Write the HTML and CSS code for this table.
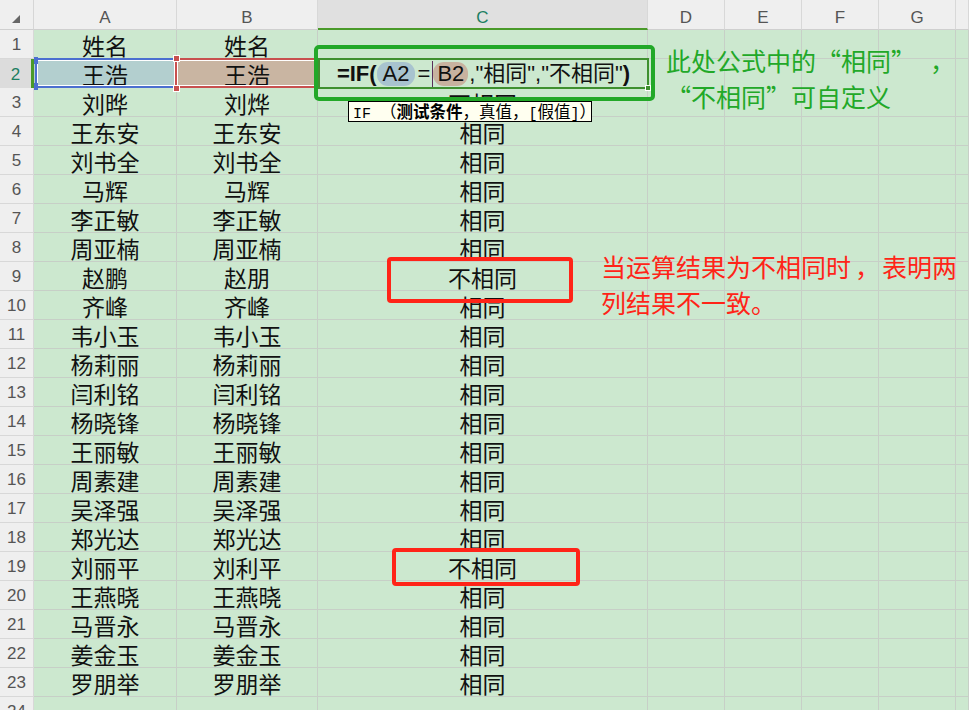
FILE: index.html
```html
<!DOCTYPE html>
<html lang="zh-CN">
<head>
<meta charset="utf-8">
<title>IF 比较两列</title>
<link rel="stylesheet" href="styles.css">
</head>
<body>
<div class="sheet">
  <div class="row head">
    <div class="corner"><span class="tri"></span></div>
    <div class="ch">A</div>
    <div class="ch">B</div>
    <div class="ch sel">C</div>
    <div class="ch">D</div>
    <div class="ch">E</div>
    <div class="ch">F</div>
    <div class="ch">G</div>
    <div class="ch"></div>
  </div>

  <div class="row"><div class="rh">1</div><div class="cell">姓名</div><div class="cell">姓名</div><div class="cell"></div><div class="cell"></div><div class="cell"></div><div class="cell"></div><div class="cell"></div><div class="cell"></div></div>
  <div class="row"><div class="rh active">2</div><div class="cell ref-a">王浩<span class="hd tl"></span><span class="hd bl"></span></div><div class="cell ref-b">王浩<span class="hd tl"></span><span class="hd bl"></span></div><div class="cell editing"><span class="formula"><b>=IF(</b><span class="pill pa">A2</span>=<span class="caret"></span><span class="pill pb">B2</span>,"相同","不相同"<b>)</b></span><span class="fill"></span></div><div class="cell"></div><div class="cell"></div><div class="cell"></div><div class="cell"></div><div class="cell"></div></div>
  <div class="row"><div class="rh">3</div><div class="cell">刘晔</div><div class="cell">刘烨</div><div class="cell">不相同</div><div class="cell"></div><div class="cell"></div><div class="cell"></div><div class="cell"></div><div class="cell"></div></div>
  <div class="row"><div class="rh">4</div><div class="cell">王东安</div><div class="cell">王东安</div><div class="cell">相同</div><div class="cell"></div><div class="cell"></div><div class="cell"></div><div class="cell"></div><div class="cell"></div></div>
  <div class="row"><div class="rh">5</div><div class="cell">刘书全</div><div class="cell">刘书全</div><div class="cell">相同</div><div class="cell"></div><div class="cell"></div><div class="cell"></div><div class="cell"></div><div class="cell"></div></div>
  <div class="row"><div class="rh">6</div><div class="cell">马辉</div><div class="cell">马辉</div><div class="cell">相同</div><div class="cell"></div><div class="cell"></div><div class="cell"></div><div class="cell"></div><div class="cell"></div></div>
  <div class="row"><div class="rh">7</div><div class="cell">李正敏</div><div class="cell">李正敏</div><div class="cell">相同</div><div class="cell"></div><div class="cell"></div><div class="cell"></div><div class="cell"></div><div class="cell"></div></div>
  <div class="row"><div class="rh">8</div><div class="cell">周亚楠</div><div class="cell">周亚楠</div><div class="cell">相同</div><div class="cell"></div><div class="cell"></div><div class="cell"></div><div class="cell"></div><div class="cell"></div></div>
  <div class="row"><div class="rh">9</div><div class="cell">赵鹏</div><div class="cell">赵朋</div><div class="cell">不相同</div><div class="cell"></div><div class="cell"></div><div class="cell"></div><div class="cell"></div><div class="cell"></div></div>
  <div class="row"><div class="rh">10</div><div class="cell">齐峰</div><div class="cell">齐峰</div><div class="cell">相同</div><div class="cell"></div><div class="cell"></div><div class="cell"></div><div class="cell"></div><div class="cell"></div></div>
  <div class="row"><div class="rh">11</div><div class="cell">韦小玉</div><div class="cell">韦小玉</div><div class="cell">相同</div><div class="cell"></div><div class="cell"></div><div class="cell"></div><div class="cell"></div><div class="cell"></div></div>
  <div class="row"><div class="rh">12</div><div class="cell">杨莉丽</div><div class="cell">杨莉丽</div><div class="cell">相同</div><div class="cell"></div><div class="cell"></div><div class="cell"></div><div class="cell"></div><div class="cell"></div></div>
  <div class="row"><div class="rh">13</div><div class="cell">闫利铭</div><div class="cell">闫利铭</div><div class="cell">相同</div><div class="cell"></div><div class="cell"></div><div class="cell"></div><div class="cell"></div><div class="cell"></div></div>
  <div class="row"><div class="rh">14</div><div class="cell">杨晓锋</div><div class="cell">杨晓锋</div><div class="cell">相同</div><div class="cell"></div><div class="cell"></div><div class="cell"></div><div class="cell"></div><div class="cell"></div></div>
  <div class="row"><div class="rh">15</div><div class="cell">王丽敏</div><div class="cell">王丽敏</div><div class="cell">相同</div><div class="cell"></div><div class="cell"></div><div class="cell"></div><div class="cell"></div><div class="cell"></div></div>
  <div class="row"><div class="rh">16</div><div class="cell">周素建</div><div class="cell">周素建</div><div class="cell">相同</div><div class="cell"></div><div class="cell"></div><div class="cell"></div><div class="cell"></div><div class="cell"></div></div>
  <div class="row"><div class="rh">17</div><div class="cell">吴泽强</div><div class="cell">吴泽强</div><div class="cell">相同</div><div class="cell"></div><div class="cell"></div><div class="cell"></div><div class="cell"></div><div class="cell"></div></div>
  <div class="row"><div class="rh">18</div><div class="cell">郑光达</div><div class="cell">郑光达</div><div class="cell">相同</div><div class="cell"></div><div class="cell"></div><div class="cell"></div><div class="cell"></div><div class="cell"></div></div>
  <div class="row"><div class="rh">19</div><div class="cell">刘丽平</div><div class="cell">刘利平</div><div class="cell">不相同</div><div class="cell"></div><div class="cell"></div><div class="cell"></div><div class="cell"></div><div class="cell"></div></div>
  <div class="row"><div class="rh">20</div><div class="cell">王燕晓</div><div class="cell">王燕晓</div><div class="cell">相同</div><div class="cell"></div><div class="cell"></div><div class="cell"></div><div class="cell"></div><div class="cell"></div></div>
  <div class="row"><div class="rh">21</div><div class="cell">马晋永</div><div class="cell">马晋永</div><div class="cell">相同</div><div class="cell"></div><div class="cell"></div><div class="cell"></div><div class="cell"></div><div class="cell"></div></div>
  <div class="row"><div class="rh">22</div><div class="cell">姜金玉</div><div class="cell">姜金玉</div><div class="cell">相同</div><div class="cell"></div><div class="cell"></div><div class="cell"></div><div class="cell"></div><div class="cell"></div></div>
  <div class="row"><div class="rh">23</div><div class="cell">罗朋举</div><div class="cell">罗朋举</div><div class="cell">相同</div><div class="cell"></div><div class="cell"></div><div class="cell"></div><div class="cell"></div><div class="cell"></div></div>
  <div class="row"><div class="rh">24</div><div class="cell"></div><div class="cell"></div><div class="cell"></div><div class="cell"></div><div class="cell"></div><div class="cell"></div><div class="cell"></div><div class="cell"></div></div>

  <div class="tooltip"><span class="fn">IF </span>（<b>测试条件</b>，真值，<span class="fn">[</span>假值<span class="fn">]</span>）</div>
  <div class="gbox"></div>
  <div class="note green"><div>此处公式中的<span class="q ql">“</span>相同<span class="q qr">”</span><span class="cm">，</span></div><div><span class="q ql">“</span>不相同<span class="q qr">”</span>可自定义</div></div>
  <div class="rbox r1"></div>
  <div class="rbox r2"></div>
  <div class="note red"><div>当运算结果为不相同时<span class="cm2">，</span>表明两</div><div>列结果不一致。</div></div>
</div>
</body>
</html>
```

FILE: styles.css
```css
* { box-sizing: border-box; }

body {
  margin: 0;
  width: 969px;
  height: 710px;
  overflow: hidden;
  background: #efefef;
  font-family: "Noto Sans CJK SC", sans-serif;
}

.sheet {
  position: relative;
  width: 969px;
}

.row {
  display: grid;
  grid-template-columns: 34px 143px 141px 330px 77px 77px 77px 77px 1fr;
  height: 29px;
}

.row.head {
  height: 30px;
}

.corner {
  background: #efefef;
  border-right: 1px solid #d6d6d6;
  border-bottom: 1px solid #cfcfcf;
  position: relative;
}

.tri {
  position: absolute;
  left: 12px;
  top: 15px;
  width: 0;
  height: 0;
  border-left: 8px solid transparent;
  border-bottom: 8px solid #666;
}

.ch {
  background: #efefef;
  border-right: 1px solid #d8d8d8;
  border-bottom: 1px solid #cfcfcf;
  font-family: "Liberation Sans", sans-serif;
  font-size: 17px;
  color: #555;
  display: flex;
  align-items: center;
  justify-content: center;
  padding-top: 6px;
}

.ch.sel {
  background: #e0e0e0;
  color: #1d7f62;
  border-bottom: 2px solid #4a9a2a;
  padding-top: 7px;
}

.rh {
  background: #efefef;
  border-right: 1px solid #d8d8d8;
  border-bottom: 1px solid #d8d8d8;
  font-family: "Liberation Sans", sans-serif;
  font-size: 17px;
  color: #555;
  display: flex;
  align-items: center;
  justify-content: center;
  padding-top: 2px;
}

.rh.active {
  background: #dcdcdc;
  color: #1d7f62;
  border-right: 3px solid #4a9a2a;
}

.cell {
  position: relative;
  background: #cce8cf;
  border-right: 1px solid #c7cfc7;
  border-bottom: 1px solid #c7cfc7;
  font-size: 23px;
  line-height: 25px;
  padding-top: 3px;
  text-align: center;
  color: #111;
  white-space: nowrap;
}

.ref-a {
  background: #b3cfcf;
}

.ref-a::before {
  content: "";
  position: absolute;
  left: 1px;
  top: -1px;
  right: -1px;
  bottom: 0;
  border: 2px solid #4b6fd0;
  box-shadow: inset 0 0 0 1px #fff;
}

.ref-b {
  background: #c9b5a2;
}

.ref-b::before {
  content: "";
  position: absolute;
  left: -2px;
  top: -1px;
  right: 0;
  bottom: 0;
  border: 2px solid #c8504f;
  box-shadow: inset 0 0 0 1px #fff;
}

.hd {
  position: absolute;
  width: 6px;
  height: 7px;
  z-index: 2;
}

.ref-a .hd {
  background: #4b6fd0;
  left: 0;
  width: 4px;
}

.ref-a .hd.tl { top: -2px; }
.ref-a .hd.bl { bottom: -2px; }

.ref-b .hd {
  background: #c8504f;
  border: 1px solid #fff;
  left: -4px;
  width: 7px;
}

.ref-b .hd.tl { top: -4px; }
.ref-b .hd.bl { bottom: -4px; }

.editing {
  display: flex;
  align-items: center;
  justify-content: center;
  border: 2px solid #3f9030;
  margin-top: -1px;
  margin-right: -1px;
  height: 31px;
  padding-top: 0;
  z-index: 1;
}

.formula {
  font-family: "Liberation Sans", "Noto Sans CJK SC", sans-serif;
  font-size: 22px;
  color: #111;
  display: flex;
  align-items: center;
  line-height: 24px;
  margin-top: 1px;
}

.formula b {
  font-weight: 700;
}

.pill {
  display: inline-block;
  padding: 0 4px;
  border-radius: 11px;
  height: 24px;
  line-height: 24px;
}

.pa {
  background: #a8c3cf;
  margin: 0 3px 0 0;
  padding: 0 5px 0 6px;
}

.pb {
  background: #c8b29f;
  margin: 0 1px 0 0;
}

.caret {
  display: inline-block;
  width: 1px;
  height: 26px;
  background: #5a2e5a;
  margin-left: 2px;
}

.fill {
  position: absolute;
  right: -4px;
  bottom: -4px;
  width: 6px;
  height: 6px;
  background: #3f9030;
  border: 1px solid #fff;
}

.tooltip {
  position: absolute;
  left: 348px;
  top: 101px;
  width: 244px;
  height: 21px;
  background: #fffff0;
  border: 1px solid #000;
  font-family: "Noto Sans CJK SC", sans-serif;
  font-size: 16.5px;
  line-height: 19px;
  color: #000;
  padding-left: 4px;
  white-space: nowrap;
  z-index: 5;
}

.tooltip .fn {
  font-family: "Liberation Mono", monospace;
  font-size: 15px;
}

.tooltip b {
  font-weight: 700;
}

.gbox {
  position: absolute;
  left: 314px;
  top: 45px;
  width: 341px;
  height: 56px;
  border: 4px solid #22a828;
  border-radius: 5px;
  z-index: 4;
}

.rbox {
  position: absolute;
  border: 4px solid #ff2418;
  border-radius: 4px;
  z-index: 4;
}

.r1 {
  left: 387px;
  top: 257px;
  width: 186px;
  height: 46px;
}

.r2 {
  left: 392px;
  top: 548px;
  width: 188px;
  height: 38px;
}

.note {
  position: absolute;
  font-size: 25px;
  line-height: 36px;
  white-space: nowrap;
  z-index: 4;
}

.q {
  display: inline-block;
  width: 25px;
}

.ql {
  text-align: right;
}

.qr {
  text-align: left;
}

.cm {
  margin-left: 14px;
}

.note.green {
  left: 666px;
  top: 42px;
  color: #22a828;
}

.note.red {
  left: 601px;
  top: 248px;
  color: #ff2418;
}

.cm2 {
  display: inline-block;
  margin-left: 4px;
  margin-right: 2px;
}
```
